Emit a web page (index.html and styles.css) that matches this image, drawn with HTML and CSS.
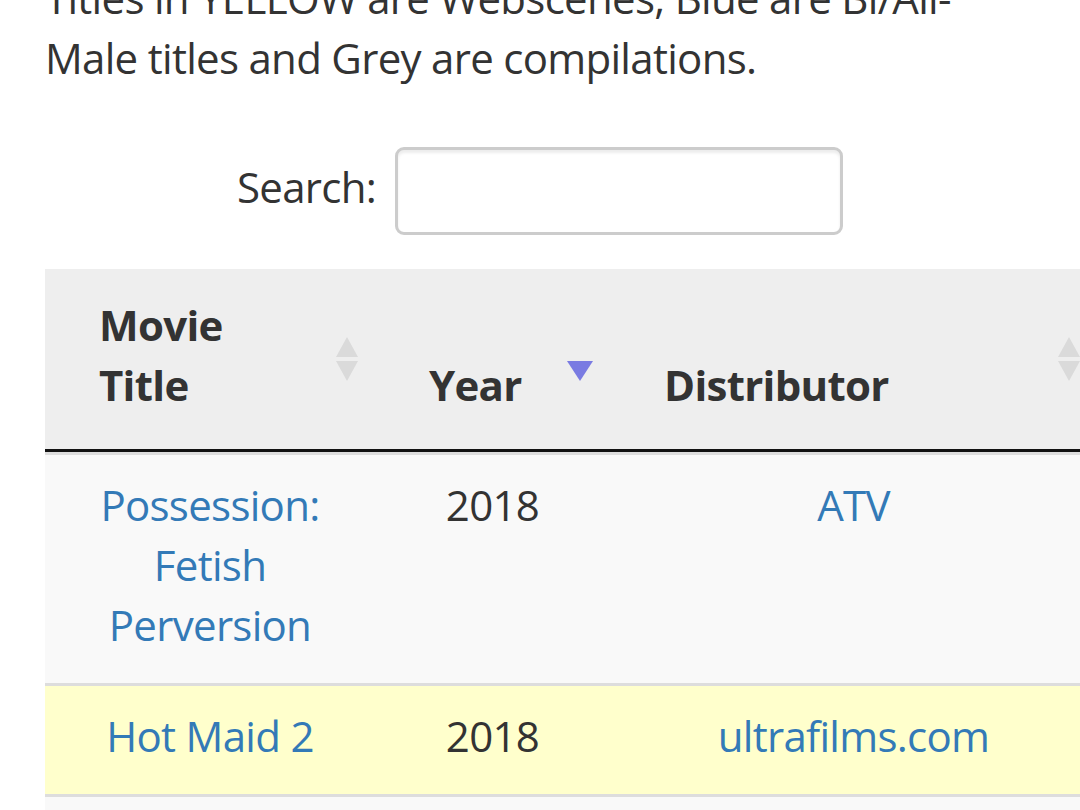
FILE: index.html
```html
<!DOCTYPE html>
<html lang="en">
<head>
<meta charset="utf-8">
<title>Movies</title>
<link rel="stylesheet" href="styles.css">
</head>
<body>
<div class="page">
  <p class="intro">Titles in YELLOW are Webscenes, Blue are Bi/All-Male titles and Grey are compilations.</p>
  <div class="filter">
    <label class="filter-label" for="search">Search:</label>
    <input class="filter-input" id="search" type="search">
  </div>
  <table class="movies">
    <colgroup>
      <col class="c-title">
      <col class="c-year">
      <col class="c-dist">
    </colgroup>
    <thead>
      <tr>
        <th>Movie Title
          <svg class="sort sort-both" viewBox="0 0 24 46" width="24" height="46"><polygon points="12,1 23,21 1,21"/><polygon points="1,25 23,25 12,45"/></svg>
        </th>
        <th>Year
          <svg class="sort sort-desc" viewBox="0 0 28 22" width="28" height="22"><polygon points="1,1 27,1 14,21"/></svg>
        </th>
        <th>Distributor
          <svg class="sort sort-both" viewBox="0 0 24 46" width="24" height="46"><polygon points="12,1 23,21 1,21"/><polygon points="1,25 23,25 12,45"/></svg>
        </th>
      </tr>
    </thead>
    <tbody>
      <tr class="row-plain">
        <td><a href="#">Possession: Fetish Perversion</a></td>
        <td>2018</td>
        <td><a href="#">ATV</a></td>
      </tr>
      <tr class="row-yellow">
        <td><a href="#">Hot Maid 2</a></td>
        <td>2018</td>
        <td><a href="#">ultrafilms.com</a></td>
      </tr>
      <tr class="row-plain">
        <td><a href="#">&nbsp;</a></td>
        <td>&nbsp;</td>
        <td>&nbsp;</td>
      </tr>
    </tbody>
  </table>
</div>
</body>
</html>
```
FILE: styles.css
```css
html, body {
  margin: 0;
  padding: 0;
  background: #ffffff;
  overflow: hidden;
}

body {
  font-family: "Open Sans", "Noto Sans", sans-serif;
  font-size: 42px;
  line-height: 60px;
  color: #333333;
  letter-spacing: -0.7px;
}

.page {
  padding: 0 45px;
  width: 990px;
}

.intro {
  margin: -32px 0 0 0;
}

.filter {
  display: flex;
  justify-content: center;
  align-items: center;
  margin-top: 59px;
}

.filter-label {
  margin-right: 19px;
  padding-bottom: 8px;
}

.filter-input {
  width: 448px;
  height: 88px;
  box-sizing: border-box;
  border: 3px solid #cccccc;
  border-radius: 9px;
  box-shadow: inset 0 3px 3px rgba(0, 0, 0, 0.075);
  background: #ffffff;
  padding: 15px;
  font: inherit;
  outline: none;
}

.movies {
  margin-top: 34px;
  width: 1052px;
  table-layout: fixed;
  border-collapse: separate;
  border-spacing: 0;
}

.c-title { width: 330px; }
.c-year { width: 235px; }
.c-dist { width: 487px; }

.movies th {
  position: relative;
  background: #eeeeee;
  text-align: left;
  vertical-align: bottom;
  font-weight: 700;
  padding: 26px 70px 34px 54px;
  border-bottom: 3px solid #111111;
}

.movies td {
  text-align: center;
  vertical-align: top;
  padding: 20px 30px 28px;
  border-top: 3px solid #dddddd;
}

.row-plain td { background: #f9f9f9; }
.row-yellow td { background: #ffffcc; }

.movies a {
  color: #337ab7;
  text-decoration: none;
}

.sort {
  position: absolute;
  right: 16px;
  display: block;
}

.sort-both {
  top: calc(50% - 23px);
  fill: #dadada;
}

.sort-desc {
  top: calc(50% + 1px);
  fill: #7a7be2;
}
```
